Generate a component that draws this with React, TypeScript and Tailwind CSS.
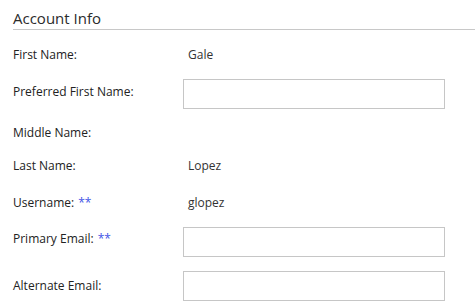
import React from "react";

type Row = {
  label: string;
  req?: boolean;
  value?: string;
  input?: boolean;
  h: string;
  pt: string;
  mt?: string;
};

const rows: Row[] = [
  { label: "First Name:", value: "Gale", h: "h-[42px]", pt: "pt-[17px]" },
  { label: "Preferred First Name:", input: true, h: "h-[46px]", pt: "pt-[12px]", mt: "mt-[7px]" },
  { label: "Middle Name:", h: "h-[32px]", pt: "pt-[7px]" },
  { label: "Last Name:", value: "Lopez", h: "h-[37px]", pt: "pt-[8px]" },
  { label: "Username:", req: true, value: "glopez", h: "h-[35px]", pt: "pt-[8px]" },
  { label: "Primary Email:", req: true, input: true, h: "h-[44px]", pt: "pt-[9px]", mt: "mt-[5px]" },
  { label: "Alternate Email:", input: true, h: "h-[42px]", pt: "pt-[12px]", mt: "mt-[5px]" },
];

const App = () => {
  return (
    <div
      className="w-[475px] h-[308px] bg-white pl-[13px] overflow-hidden text-[#333]"
      style={{ fontFamily: '"Open Sans", "Liberation Sans", sans-serif' }}
    >
      <div className="mt-[7px] h-[23px] border-b border-[#c8c8c8] pt-[1px] text-[15px] leading-5 text-[#2b2b2b]">
        Account Info
      </div>
      {rows.map((r) => (
        <div key={r.label} className={`flex items-start ${r.h}`}>
          <div className={`w-[170px] text-[12px] leading-4 text-[#222] ${r.pt}`}>
            {r.label}
            {r.req && <span className="ml-1 text-[#3f54e6]">**</span>}
          </div>
          {r.input ? (
            <input
              type="text"
              className={`w-[262px] h-[30px] border border-[#c6c6c6] bg-white px-[5px] text-[12px] outline-none ${r.mt}`}
            />
          ) : (
            <div className={`pl-[5px] text-[12px] leading-4 text-[#333] ${r.pt}`}>{r.value}</div>
          )}
        </div>
      ))}
    </div>
  );
};

export default App;
